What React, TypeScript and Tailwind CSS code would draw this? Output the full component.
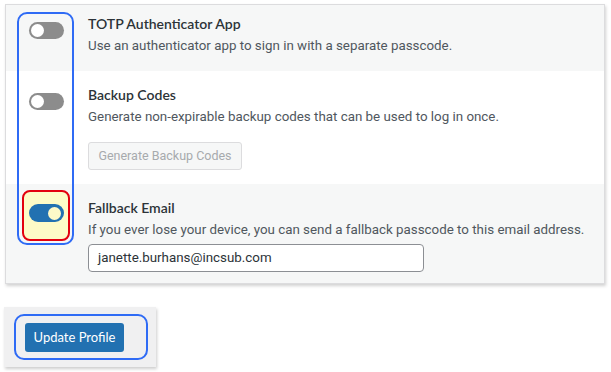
const body = { fontFamily: 'Roboto, "Liberation Sans", sans-serif' }
const head = { fontFamily: 'Lato, "Noto Sans", sans-serif' }

function Toggle({ on }: { on?: boolean }) {
  if (on) {
    return (
      <div className="flex h-[18px] w-[35px] items-center justify-end rounded-full bg-[#2271b1] pr-[3px]">
        <div className="h-[13px] w-[13px] rounded-full bg-[#fdf9c8]" />
      </div>
    )
  }
  return (
    <div className="flex h-[17px] w-[35px] items-center rounded-full bg-[#8c8c8c] pl-[2px]">
      <div className="h-[13px] w-[13px] rounded-full bg-white" />
    </div>
  )
}

export default function App() {
  return (
    <div className="relative h-[372px] w-[611px] overflow-hidden bg-white text-[13.35px] leading-[20px]" style={body}>
      <div className="ml-[5px] mt-[4px] w-[600px] border border-[#dcdcde] shadow-[1px_2px_3px_rgba(0,0,0,0.18)]">
        <div className="flex bg-[#f6f7f7] pb-[15px] pt-[9px]">
          <div className="w-[82px] pl-[23px] pt-[8px]">
            <Toggle />
          </div>
          <div>
            <div className="text-[14px] font-semibold text-[#2c3338]" style={head}>TOTP Authenticator App</div>
            <div className="mt-[2px] text-[#50575e]">Use an authenticator app to sign in with a separate passcode.</div>
          </div>
        </div>
        <div className="flex bg-white pb-[14px] pt-[14px]">
          <div className="w-[82px] pl-[23px] pt-[8px]">
            <Toggle />
          </div>
          <div>
            <div className="text-[14px] font-semibold text-[#2c3338]" style={head}>Backup Codes</div>
            <div className="mt-[2px] text-[#50575e]">Generate non-expirable backup codes that can be used to log in once.</div>
            <button
              type="button"
              className="mt-[15px] h-[28px] w-[154px] rounded-[3px] border border-[#dcdcde] bg-[#f6f7f7] text-[12.5px] text-[#a7aaad]"
              style={body}
            >
              Generate Backup Codes
            </button>
          </div>
        </div>
        <div className="flex bg-[#f6f7f7]">
          <div className="w-[82px] pl-[16px] pt-[6px]">
            {/* highlighted toggle */}
            <div className="flex h-[51px] w-[48px] justify-center rounded-[8px] border-[2px] border-[#e3000f] bg-[#fdfbc7] pt-[12px]">
              <Toggle on />
            </div>
          </div>
          <div className="pb-[11px] pt-[14px]">
            <div className="text-[14px] font-semibold text-[#2c3338]" style={head}>Fallback Email</div>
            <div className="mt-[2px] text-[#50575e]">If you ever lose your device, you can send a fallback passcode to this email address.</div>
            <div className="mt-[4px] flex h-[28px] w-[336px] items-center rounded-[4px] border border-[#8c8f94] bg-white px-[9px] text-[#2c3338]">
              janette.burhans@incsub.com
            </div>
          </div>
        </div>
      </div>

      <div className="ml-[4px] mt-[23px] flex h-[60px] w-[152px] items-center bg-[#f0f0f1] pl-[21px] shadow-[1px_2px_3px_rgba(0,0,0,0.2)]">
        <button type="button" className="h-[29px] w-[99px] rounded-[3px] bg-[#2271b1] text-[13px] text-white" style={head}>
          Update Profile
        </button>
      </div>

      {/* annotation outlines */}
      <div className="absolute left-[17px] top-[12px] h-[233px] w-[57px] rounded-[10px] border-[2px] border-[#2f6bf5]" />
      <div className="absolute left-[14px] top-[314px] h-[46px] w-[134px] rounded-[10px] border-[2px] border-[#2f6bf5]" />
    </div>
  )
}
